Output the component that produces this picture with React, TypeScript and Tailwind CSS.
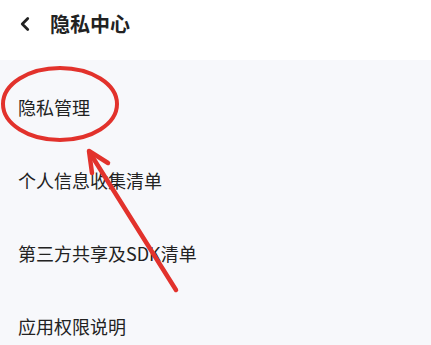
import { ChevronLeft } from "lucide-react";

const items = ["隐私管理", "个人信息收集清单", "第三方共享及SDK清单", "应用权限说明"];

export default function App() {
    return (
        <div className="relative h-[345px] w-[431px] overflow-hidden bg-[#f7f8fb] font-['Noto_Sans_CJK_SC',sans-serif] text-[#222]">
            <header className="flex h-[60px] items-center gap-[14px] bg-white pb-[12px] pl-[14px]">
                <ChevronLeft className="h-[22px] w-[22px] text-[#222]" strokeWidth={3} />
                <h1 className="text-[20px] font-bold leading-none">隐私中心</h1>
            </header>

            <ul className="pt-[10px]">
                {items.map((item) => (
                    <li
                        key={item}
                        className="flex h-[73px] items-center pl-[18px] text-[18px] leading-none"
                    >
                        {item}
                    </li>
                ))}
            </ul>

            {/* annotation overlay */}
            <svg
                className="pointer-events-none absolute inset-0"
                width="431"
                height="345"
                viewBox="0 0 431 345"
            >
                <ellipse cx="60" cy="104" rx="57" ry="36" fill="none" stroke="#e2322c" strokeWidth="4" />
                <line x1="176" y1="290" x2="90" y2="153" stroke="#e2322c" strokeWidth="4.5" strokeLinecap="round" />
                <polyline
                    points="92,173 89,151 108,163"
                    fill="none"
                    stroke="#e2322c"
                    strokeWidth="4.5"
                    strokeLinecap="round"
                    strokeLinejoin="round"
                />
            </svg>
        </div>
    );
}
